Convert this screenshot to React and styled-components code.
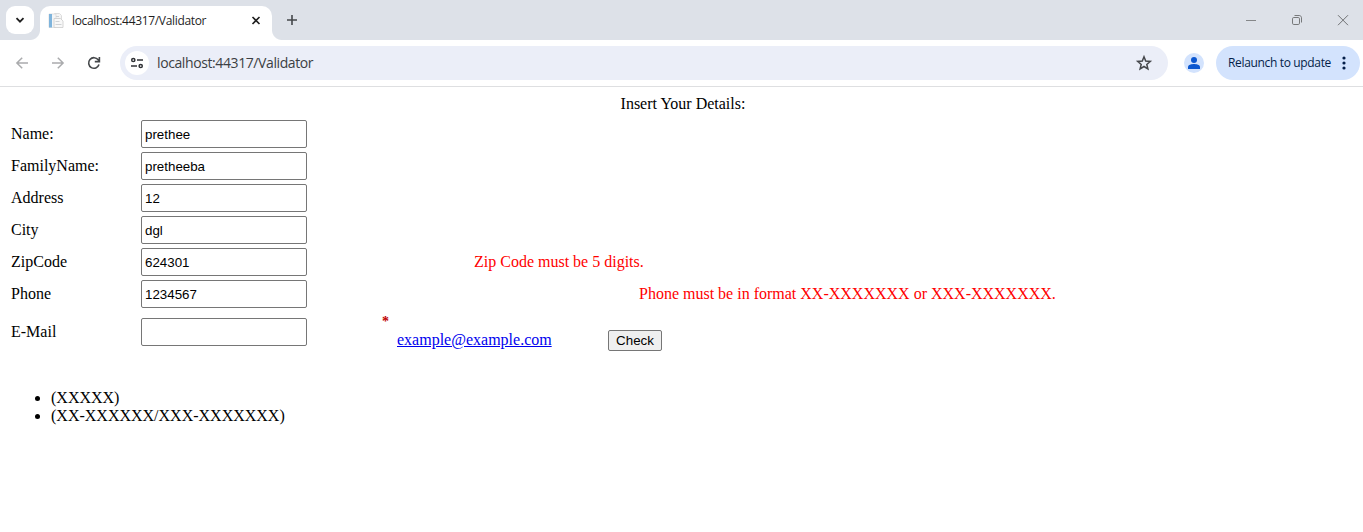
import React from "react";
import styled, { createGlobalStyle } from "styled-components";

const GlobalStyle = createGlobalStyle`
  * { box-sizing: border-box; }
  body { margin: 0; background: #fff; overflow: hidden; }
`;

const Window = styled.div`
  height: 532px;
  background: #fff;
  color: #000;
  font: 16px/18px "Liberation Serif", "Times New Roman", serif;
`;
const TabStrip = styled.header`
  display: flex;
  height: 40px;
  padding: 6px 0 0 6px;
  background: #dde1e8;
  font-family: "Open Sans", "Noto Sans", sans-serif;
`;
const TabSearch = styled.div`
  width: 28px;
  height: 28px;
  margin-right: 6px;
  border-radius: 9px;
  background: #fff;
`;
const Tab = styled.div`
  position: relative;
  display: flex;
  align-items: center;
  width: 232px;
  height: 34px;
  padding: 0 9px 5px 8px;
  border-radius: 10px 10px 0 0;
  background: #fff;
  &::before, &::after {
    content: "";
    position: absolute;
    bottom: 0;
    width: 10px;
    height: 10px;
  }
  &::before { left: -10px; background: radial-gradient(circle at 0 0, transparent 9.5px, #fff 10.5px); }
  &::after { right: -10px; background: radial-gradient(circle at 100% 0, transparent 9.5px, #fff 10.5px); }
`;
const TabTitle = styled.span`
  flex: 1;
  margin-left: 8px;
  white-space: nowrap;
  font-size: 12px;
  line-height: 18px;
  letter-spacing: -0.33px;
  color: #1f1f1f;
`;
const NewTab = styled.div`
  margin: 7px 0 0 14px;
  width: 12px;
  height: 14px;
`;
const WindowControls = styled.div`
  display: flex;
  gap: 34px;
  margin: 8px 14px 0 auto;
  height: 12px;
`;
const Icon = styled.svg`
  display: block;
  flex: none;
  overflow: visible;
`;
const Avatar = styled(Icon)`
  margin-left: 16px;
`;
const Toolbar = styled.div`
  display: flex;
  align-items: center;
  height: 47px;
  padding: 0 3px 1px 15px;
  border-bottom: 1px solid #dedfe1;
  background: #fff;
  font-family: "Open Sans", "Noto Sans", sans-serif;
`;
const Navigation = styled.nav`
  display: flex;
  gap: 22px;
  width: 105px;
`;
const AddressBar = styled.div`
  display: flex;
  align-items: center;
  width: 1048px;
  height: 34px;
  padding: 0 16px 0 5px;
  border-radius: 17px;
  background: #ebeef8;
`;
const SiteInfo = styled.div`
  display: grid;
  place-items: center;
  width: 24px;
  height: 24px;
  border-radius: 50%;
  background: #fff;
`;
const Url = styled.span`
  flex: 1;
  margin-left: 8px;
  font-size: 14px;
  line-height: 20px;
  letter-spacing: -0.4px;
  color: #3c3f43;
`;
const Relaunch = styled.div`
  display: flex;
  align-items: center;
  justify-content: space-between;
  width: 144px;
  height: 34px;
  margin-left: 12px;
  padding: 0 14px 0 12px;
  border-radius: 17px;
  background: #d3e3fd;
  color: #041e49;
  font-size: 12px;
  letter-spacing: -0.34px;
  white-space: nowrap;
`;
const Page = styled.main`
  padding: 8px 8px 0;
`;
const Heading = styled.div`
  height: 23px;
  text-align: center;
  padding-left: 3px;
`;
const Row = styled.div`
  display: flex;
  align-items: center;
  height: ${(p) => p.$height || 32}px;
  padding-left: 3px;
`;
const Label = styled.label`
  width: 130px;
`;
const Field = styled.input`
  width: 166px;
  height: 28px;
  padding: 1px 3px;
  border: 1px solid #767676;
  border-radius: 2px;
  outline: 0;
  background: #fff;
  color: #000;
  font: 13.333px "Liberation Sans", Arial, sans-serif;
`;
const Message = styled.span`
  margin-left: ${(p) => p.$indent}px;
  color: red;
  white-space: nowrap;
`;
const EmailExtras = styled.div`
  display: flex;
  align-items: flex-start;
  height: 36px;
  margin-left: 75px;
`;
const Required = styled.span`
  width: 15px;
  color: #c00000;
  font-size: 14px;
  font-weight: bold;
  line-height: 15px;
`;
const Link = styled.a`
  width: 211px;
  margin-top: 17px;
  color: #0000ee;
`;
const CheckButton = styled.button`
  width: 54px;
  height: 21px;
  margin-top: 16px;
  padding: 0;
  border: 1px solid #767676;
  border-radius: 2px;
  background: #efefef;
  color: #000;
  font: 13.333px "Liberation Sans", Arial, sans-serif;
`;
const Formats = styled.ul`
  margin: 35px 0 0;
  padding-left: 43px;
`;

const fields = [
  { label: "Name:", value: "prethee" },
  { label: "FamilyName:", value: "pretheeba" },
  { label: "Address", value: "12" },
  { label: "City", value: "dgl" },
  { label: "ZipCode", value: "624301", message: "Zip Code must be 5 digits.", indent: 167 },
  { label: "Phone", value: "1234567", message: "Phone must be in format XX-XXXXXXX or XXX-XXXXXXX.", indent: 332 },
];

function BrowserTabs() {
  return (
    <TabStrip>
      <TabSearch>
        <Icon width="28" height="28" fill="none" stroke="#1f1f1f" strokeWidth="1.8"><path d="M10.5 12.2l3.5 3.5 3.5-3.5" /></Icon>
      </TabSearch>
      <Tab>
        <Icon width="16" height="16">
          <path d="M6.5.5h5l2 2v4h-7z" fill="#f5f5f5" stroke="#dcdcdc" />
          <path d="M1 1h7v13.5H1z" fill="#f4f5f6" stroke="#d9d9d9" strokeWidth=".7" />
          <path d="M1 1h3v13.5H1z" fill="#7fb4dc" />
          <path d="M6 5.5h6.5l2.5 2.5v6.5H6z" fill="#f8f8f8" stroke="#cbcbcb" strokeWidth=".8" />
          <path d="M7.5 8.5h4M7.5 11.5h6M8 3.5h3" stroke="#cfd2d5" />
        </Icon>
        <TabTitle>localhost:44317/Validator</TabTitle>
        <Icon width="14" height="14" stroke="#1f1f1f" strokeWidth="1.6"><path d="M3.5 3l7 7M10.5 3l-7 7" /></Icon>
      </Tab>
      <NewTab>
        <Icon width="12" height="14" stroke="#44474a" strokeWidth="1.6"><path d="M1 7h10M6 2v10" /></Icon>
      </NewTab>
      <WindowControls>
        <Icon width="12" height="12" stroke="#858789"><path d="M1 6.5h10" /></Icon>
        <Icon width="12" height="12" fill="none" stroke="#77797b">
          <rect x="1.5" y="3.5" width="7" height="7" rx="1.3" />
          <path d="M3.5 1.5h4.7c1.3 0 2.3 1 2.3 2.3v4.7" />
        </Icon>
        <Icon width="12" height="12" stroke="#707274"><path d="M1 1.2l10 10M11 1.2l-10 10" /></Icon>
      </WindowControls>
    </TabStrip>
  );
}

function BrowserToolbar() {
  return (
    <Toolbar>
      <Navigation>
        <Icon width="14" height="14" fill="none" stroke="#aaabad" strokeWidth="1.5"><path d="M13 7H2M7.2 1.7L1.9 7l5.3 5.3" /></Icon>
        <Icon width="14" height="14" fill="none" stroke="#aaabad" strokeWidth="1.5"><path d="M1 7h11M6.8 1.7L12.1 7l-5.3 5.3" /></Icon>
        <Icon width="14" height="14" fill="none" stroke="#44474a" strokeWidth="1.6">
          <path d="M12 8.6A5.3 5.3 0 1 1 11.2 3.8L12.3 5.2M12.4 1v4.6H7.8" />
        </Icon>
      </Navigation>
      <AddressBar>
        <SiteInfo>
          <Icon width="12" height="12" fill="none" stroke="#303236" strokeWidth="1.5">
            <circle cx="2.3" cy="3" r="1.6" /><path d="M6 3h6M0 9h6" /><circle cx="9.7" cy="9" r="1.6" />
          </Icon>
        </SiteInfo>
        <Url>localhost:44317/Validator</Url>
        <Icon width="16" height="16" fill="none" stroke="#46484c" strokeWidth="1.5">
          <path d="M8 1.8l1.7 4.2 4.6.4-3.5 3 1.1 4.5L8 11.5l-3.9 2.4 1.1-4.5-3.5-3L6.3 6z" />
        </Icon>
      </AddressBar>
      <Avatar width="20" height="20">
        <circle cx="10" cy="10" r="10" fill="#d3e3fd" />
        <circle cx="10" cy="7" r="3" fill="#0b57d0" />
        <path d="M4 16v-2c0-2.2 3.7-3 6-3s6 .8 6 3v2z" fill="#0b57d0" />
      </Avatar>
      <Relaunch>
        Relaunch to update
        <Icon width="4" height="16" fill="#041e49"><circle cx="2" cy="3" r="1.6" /><circle cx="2" cy="8" r="1.6" /><circle cx="2" cy="13" r="1.6" /></Icon>
      </Relaunch>
    </Toolbar>
  );
}

export default function App() {
  return (
    <Window>
      <GlobalStyle />
      <BrowserTabs />
      <BrowserToolbar />
      <Page>
        <Heading>Insert Your Details:</Heading>
        {fields.map((field) => (
          <Row key={field.label}>
            <Label>{field.label}</Label>
            <Field defaultValue={field.value} />
            {field.message && <Message $indent={field.indent}>{field.message}</Message>}
          </Row>
        ))}
        <Row $height={44}>
          <Label>E-Mail</Label>
          <Field />
          <EmailExtras>
            <Required>*</Required>
            <Link href="#">example@example.com</Link>
            <CheckButton>Check</CheckButton>
          </EmailExtras>
        </Row>
        <Formats>
          <li>(XXXXX)</li>
          <li>(XX-XXXXXX/XXX-XXXXXXX)</li>
        </Formats>
      </Page>
    </Window>
  );
}
